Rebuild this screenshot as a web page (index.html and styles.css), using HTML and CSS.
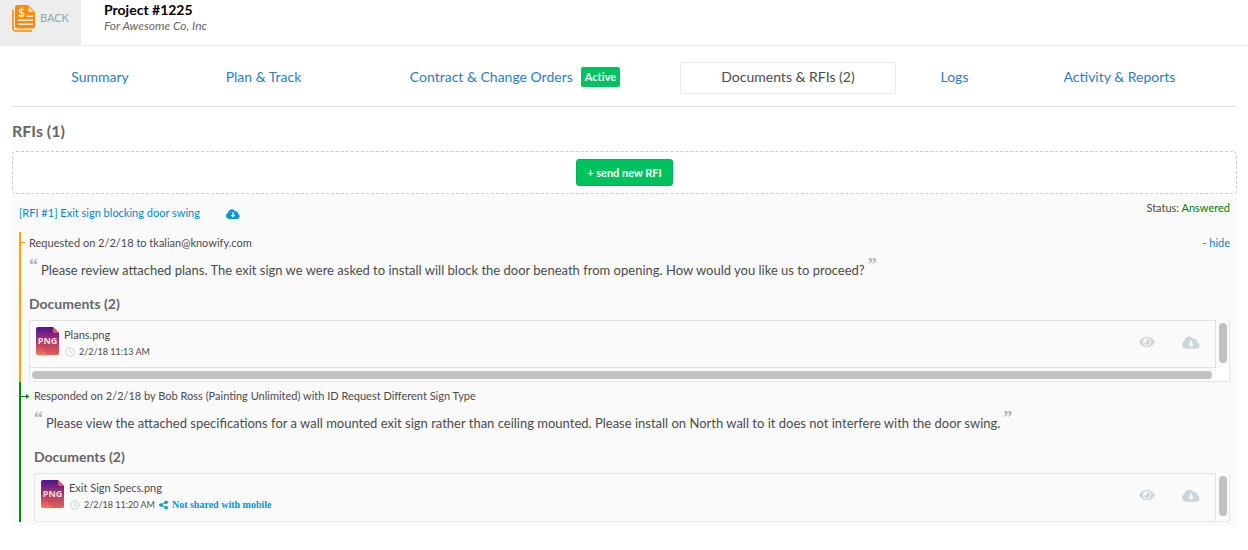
FILE: index.html
```html
<!DOCTYPE html>
<html lang="en">
<head>
<meta charset="utf-8">
<title>Project #1225</title>
<link rel="stylesheet" href="styles.css">
</head>
<body>
<svg class="defs" aria-hidden="true">
  <defs>
    <linearGradient id="png-fill" x1="0" y1="0" x2="0" y2="1">
      <stop offset="0" stop-color="#4f1296"/>
      <stop offset="0.5" stop-color="#a5386c"/>
      <stop offset="1" stop-color="#ff7058"/>
    </linearGradient>
    <symbol id="png-file" viewBox="0 0 23 28">
      <path d="M2 0h15l6 6v20a2 2 0 0 1-2 2H2a2 2 0 0 1-2-2V2a2 2 0 0 1 2-2z" fill="url(#png-fill)"/>
      <path d="M20 17l3 2v7a2 2 0 0 1-2 2h-9L3 18z" fill="#b03f62" opacity=".35"/>
      <path d="M17 0l6 6h-4.500a1.500 1.500 0 0 1-1.500-1.500z" fill="#e0566a"/>
      <text x="11.500" y="17" text-anchor="middle" class="png-label">PNG</text>
    </symbol>
    <symbol id="cloud" viewBox="0 0 20 14">
      <path fill-rule="evenodd" d="M4.500 14A4.500 4.500 0 0 1 2.700 5.400 5.500 5.500 0 0 1 13 3.200a3 3 0 0 1 4 3.600A3.700 3.700 0 0 1 16.300 14zM9 4.500v4H6.500L10 12l3.500-3.500H11v-4z" fill="currentColor"/>
    </symbol>
    <symbol id="eye" viewBox="0 0 18 12">
      <path fill-rule="evenodd" d="M0 6C2 2.200 5.200 0 9 0s7 2.200 9 6c-2 3.800-5.200 6-9 6S2 9.800 0 6zm9-4.500a4.500 4.500 0 1 0 0 9 4.500 4.500 0 0 0 0-9zm0 1.200a3.300 3.300 0 1 1-3.300 3.500C6.500 6.700 8.200 6.800 8.600 5.600 8.900 4.600 8.200 3.500 9 2.700z" fill="currentColor"/>
    </symbol>
    <symbol id="clock" viewBox="0 0 10 10">
      <circle cx="5" cy="5" r="4.300" fill="none" stroke="currentColor"/>
      <path d="M5 2.300v3l1.800 1" fill="none" stroke="currentColor"/>
    </symbol>
    <symbol id="share" viewBox="0 0 10 10">
      <path d="M8 2L2 5l6 3" fill="none" stroke="currentColor" stroke-width="1.300"/>
      <circle cx="2" cy="5" r="2" fill="currentColor"/>
      <circle cx="8" cy="2" r="1.900" fill="currentColor"/>
      <circle cx="8" cy="8" r="1.900" fill="currentColor"/>
    </symbol>
  </defs>
</svg>

<header class="top">
  <a class="back" href="#">
    <svg class="back-icon" viewBox="0 0 24 27" aria-hidden="true">
      <path d="M1 4.500v19A2.500 2.500 0 0 0 3.500 26H20" fill="none" stroke="#ff8c00" stroke-width="1.600"/>
      <path d="M5.500 0H16l7 7v14a2.500 2.500 0 0 1-2.500 2.500h-15A2.500 2.500 0 0 1 3 21V2.500A2.500 2.500 0 0 1 5.500 0z" fill="#ff8c00"/>
      <path d="M16.500 2v5h5z" fill="#ededed"/>
      <path d="M14.500 11.200H21M6 15.200h15M6 19.200h15" stroke="#ededed" stroke-width="1.400"/>
      <path d="M11.800 5C11 3.700 7 3.600 7 5.800s5 1.500 5 3.600-4 2.300-5.300.6M9.500 2.500v10" fill="none" stroke="#fff" stroke-width="1.300"/>
    </svg>
    <span>BACK</span>
  </a>
  <div class="project">
    <h1 class="project-name">Project #1225</h1>
    <p class="project-client">For Awesome Co, Inc</p>
  </div>
</header>

<main class="content">
  <nav class="tabs">
    <a class="tab" href="#">Summary</a>
    <a class="tab" href="#">Plan &amp; Track</a>
    <a class="tab" href="#">Contract &amp; Change Orders <span class="badge">Active</span></a>
    <a class="tab tab-current" href="#" aria-current="page">Documents &amp; RFIs (2)</a>
    <a class="tab" href="#">Logs</a>
    <a class="tab" href="#">Activity &amp; Reports</a>
  </nav>

  <h2 class="section-title">RFIs (1)</h2>
  <div class="new-rfi"><button class="send" type="button">+ send new RFI</button></div>

  <section class="rfi">
    <div class="rfi-head">
      <a class="rfi-link" href="#">[RFI #1] Exit sign blocking door swing</a>
      <a class="rfi-download" href="#" aria-label="Download RFI"><svg class="cloud-small"><use href="#cloud"/></svg></a>
      <p class="status">Status: <span class="answered">Answered</span></p>
    </div>

    <article class="entry entry-request">
      <svg class="tick" viewBox="0 0 9 7" aria-hidden="true"><path d="M0 3.500h4" stroke="#ffa500"/></svg>
      <div class="entry-meta"><p>Requested on 2/2/18 to tkalian@knowify.com</p><a class="hide" href="#">- hide</a></div>
      <p class="quote"><span class="mark">“</span><span class="quote-text">Please review attached plans. The exit sign we were asked to install will block the door beneath from opening. How would you like us to proceed?</span><span class="mark">”</span></p>
      <h3 class="docs-title">Documents (2)</h3>
      <div class="files">
        <div class="file">
          <svg class="png"><use href="#png-file"/></svg>
          <div class="file-info">
            <p class="file-name">Plans.png</p>
            <p class="file-meta"><svg class="clock"><use href="#clock"/></svg><span>2/2/18 11:13 AM</span></p>
          </div>
          <a class="action" href="#" aria-label="View"><svg class="eye"><use href="#eye"/></svg></a>
          <a class="action" href="#" aria-label="Download"><svg class="cloud"><use href="#cloud"/></svg></a>
        </div>
        <div class="track-y"><div class="thumb"></div></div>
        <div class="track-x"><div class="thumb"></div></div>
        <div class="corner"></div>
      </div>
    </article>

    <article class="entry entry-response">
      <svg class="tick" viewBox="0 0 9 7" aria-hidden="true"><path d="M0 3.500h7" stroke="#008a17"/><path d="M5 1l3.500 2.500L5 6z" fill="#008a17"/></svg>
      <div class="entry-meta"><p>Responded on 2/2/18 by Bob Ross (Painting Unlimited) with ID Request Different Sign Type</p></div>
      <p class="quote"><span class="mark">“</span><span class="quote-text">Please view the attached specifications for a wall mounted exit sign rather than ceiling mounted. Please install on North wall to it does not interfere with the door swing.</span><span class="mark">”</span></p>
      <h3 class="docs-title">Documents (2)</h3>
      <div class="files">
        <div class="file">
          <svg class="png"><use href="#png-file"/></svg>
          <div class="file-info">
            <p class="file-name">Exit Sign Specs.png</p>
            <p class="file-meta"><svg class="clock"><use href="#clock"/></svg><span>2/2/18 11:20 AM</span><a class="share" href="#"><svg class="share-icon"><use href="#share"/></svg>Not shared with mobile</a></p>
          </div>
          <a class="action" href="#" aria-label="View"><svg class="eye"><use href="#eye"/></svg></a>
          <a class="action" href="#" aria-label="Download"><svg class="cloud"><use href="#cloud"/></svg></a>
        </div>
        <div class="track-y"><div class="thumb"></div></div>
      </div>
    </article>
  </section>
</main>
</body>
</html>
```
FILE: styles.css
```css
* { box-sizing: border-box; }
body {
  margin: 0;
  background: #fff;
  color: #4c4c4c;
  font: 11px/16px Lato, "Open Sans", sans-serif;
}
h1, h2, h3, p { margin: 0; }
a { text-decoration: none; }
svg { display: block; flex: none; }
.defs { position: absolute; width: 0; height: 0; }

.top { display: flex; border-bottom: 1px solid #ebebeb; }
.back {
  display: flex;
  align-items: center;
  gap: 4px;
  width: 81px;
  height: 45px;
  padding: 0 0 9px 12px;
  background: #ededed;
  color: #8aa8b0;
}
.back-icon { width: 24px; height: 27px; }
.project { padding: 1px 0 0 23px; color: #000; }
.project-name { font-size: 14px; line-height: 18px; font-weight: 700; }
.project-client { font-size: 12px; line-height: 14px; font-style: italic; color: #666; }

.content { padding: 16px 11px 0 12px; }
.tabs {
  display: grid;
  grid-template-columns: 154fr 173fr 330fr 216fr 117fr 213fr;
  padding: 0 11px 12px;
  border-bottom: 1px solid #e0e0e0;
}
.tab {
  display: flex;
  align-items: center;
  justify-content: center;
  gap: 8px;
  height: 32px;
  padding-bottom: 2px;
  color: #337ac4;
  font-size: 14px;
  line-height: 20px;
  white-space: nowrap;
}
.tab-current { border: 1px solid #ebebeb; color: #4c4c4c; }
.badge {
  padding: 0 4px;
  border-radius: 2px;
  background: #00c160;
  color: #fff;
  font-size: 11px;
  font-weight: 700;
}
.section-title { padding: 14px 0 10px; font-size: 16px; line-height: 20px; color: #666; }
.new-rfi {
  display: flex;
  justify-content: center;
  padding: 7px;
  border: 1px dashed #ccc;
  border-radius: 4px;
}
.send {
  height: 27px;
  padding: 0 10px;
  border: 1px solid #00b359;
  border-radius: 3px;
  background: #00c160;
  color: #fff;
  font: 700 11px/16px Lato, "Open Sans", sans-serif;
}

.rfi { padding: 6px 7px 4px; background: #fafafa; }
.rfi-head { display: flex; gap: 26px; height: 32px; }
.rfi-link, .hide { color: #0088cc; }
.rfi-link { padding-top: 5px; }
.rfi-download { padding-top: 9px; color: #0099d4; }
.cloud-small { width: 14px; height: 10px; }
.status { margin-left: auto; }
.answered { color: #008000; }

.entry { position: relative; border-left: 2px solid; }
.entry-request { padding: 3px 0 0 8px; border-color: #ffa500; }
.entry-response { padding: 6px 0 0 13px; border-color: #008a17; }
.tick { position: absolute; left: 0; top: 7px; width: 9px; height: 7px; }
.entry-response .tick { top: 11px; }
.entry-meta { display: flex; justify-content: space-between; }
.quote { display: flex; gap: 3px; padding: 6px 0 11px; }
.quote-text { font-size: 13px; line-height: 26px; }
.mark { color: #b4b4b4; font: 700 18px/16px "Liberation Serif", serif; }
.docs-title { padding-bottom: 6px; font-size: 14px; line-height: 20px; color: #666; }
.files {
  display: grid;
  grid-template-columns: minmax(0, 1fr) 13px;
  border: 1px solid #e6e6e6;
  border-top: 0;
  border-radius: 3px;
}
.file {
  display: flex;
  align-items: flex-start;
  height: 48px;
  padding: 6px 2px 6px 6px;
  border: 1px solid #e0e0e0;
  border-left: 0;
  border-bottom: 0;
  border-radius: 3px 0 0 0;
}
.entry-request .file { border-bottom: 1px solid #e0e0e0; }
.png { width: 23px; height: 28px; }
.png-label { font: 700 9px "Open Sans", sans-serif; fill: #fbdcd8; }
.file-info { flex: 1; padding-left: 5px; }
.file-meta { display: flex; align-items: center; gap: 4px; font-size: 9px; line-height: 18px; padding-left: 1px; }
.clock { width: 10px; height: 10px; color: #ccd4d8; }
.share {
  display: flex;
  align-items: center;
  gap: 4px;
  color: #0099d4;
  font-family: "Liberation Serif", serif;
  font-size: 10px;
  font-weight: 700;
}
.share-icon { width: 9px; height: 10px; }
.action { display: flex; justify-content: center; width: 44px; padding-top: 9px; color: #ccd6da; }
.eye { width: 16px; height: 12px; }
.cloud { width: 18px; height: 13px; }
.track-y { padding: 3px 2px 4px 3px; }
.track-y .thumb { height: 40px; }
.track-x { padding: 3px 4px 2px 2px; }
.track-x .thumb { height: 8px; }
.thumb { border-radius: 4px; background: #c1c1c1; }
.corner { background: #fff; }
```
